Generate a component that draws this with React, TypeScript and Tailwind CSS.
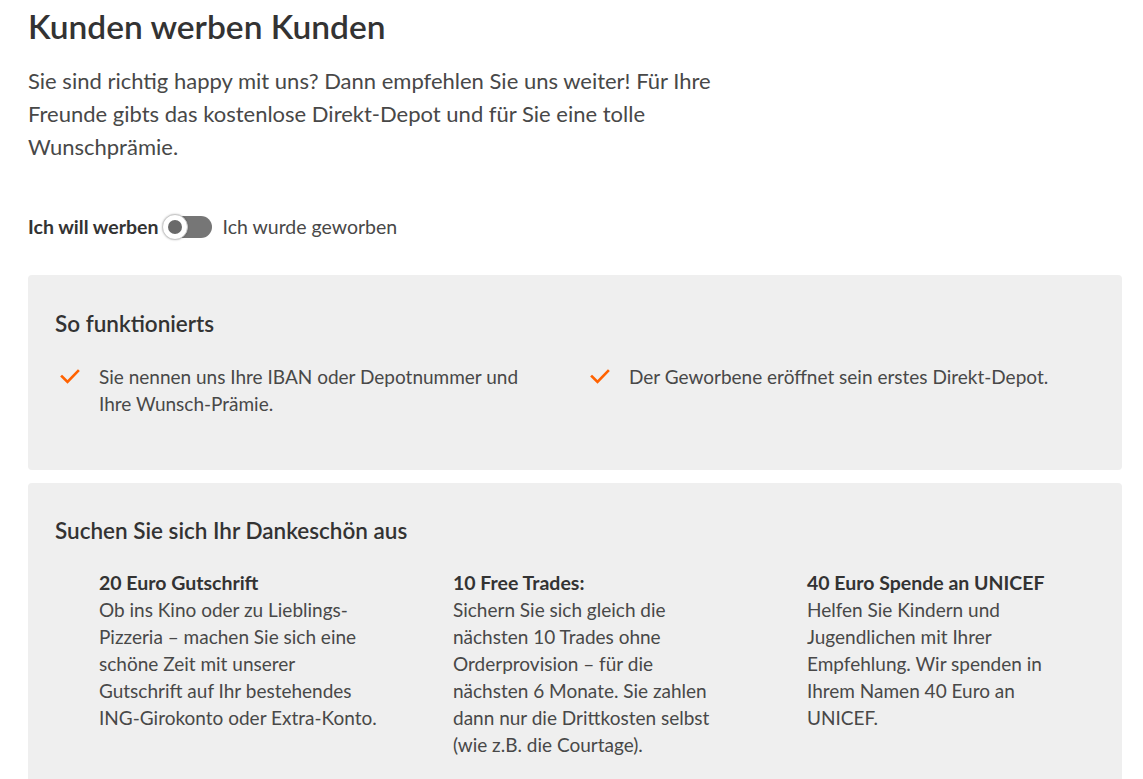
import React, { useState } from 'react';

const Check: React.FC = () => (
  <svg width="20" height="18" viewBox="0 0 20 18" className="shrink-0">
    <path d="M2 10.5 L7.5 16 L18 5" fill="none" stroke="#ff6200" strokeWidth="2.6" strokeLinecap="square" />
  </svg>
);

const rewards = [
  {
    title: '20 Euro Gutschrift',
    lines: [
      'Ob ins Kino oder zu Lieblings-',
      'Pizzeria – machen Sie sich eine',
      'schöne Zeit mit unserer',
      'Gutschrift auf Ihr bestehendes',
      'ING-Girokonto oder Extra-Konto.',
    ],
  },
  {
    title: '10 Free Trades:',
    lines: [
      'Sichern Sie sich gleich die',
      'nächsten 10 Trades ohne',
      'Orderprovision – für die',
      'nächsten 6 Monate. Sie zahlen',
      'dann nur die Drittkosten selbst',
      '(wie z.B. die Courtage).',
    ],
  },
  {
    title: '40 Euro Spende an UNICEF',
    lines: [
      'Helfen Sie Kindern und',
      'Jugendlichen mit Ihrer',
      'Empfehlung. Wir spenden in',
      'Ihrem Namen 40 Euro an',
      'UNICEF.',
    ],
  },
];

const App: React.FC = () => {
  const [recruited, setRecruited] = useState(false);

  return (
    <div className="min-h-screen bg-white pl-[28px] font-['Lato','Noto_Sans',sans-serif] text-[#333]">
      <h1 className="pt-[6px] text-[33.5px] leading-[40px] font-semibold text-[#333]">Kunden werben Kunden</h1>

      <p className="mt-[18px] text-[22px] leading-[33px] text-[#484848]">
        <span className="block">Sie sind richtig happy mit uns? Dann empfehlen Sie uns weiter! Für Ihre</span>
        <span className="block">Freunde gibts das kostenlose Direkt-Depot und für Sie eine tolle</span>
        <span className="block">Wunschprämie.</span>
      </p>

      {/* TOGGLE */}
      <div className="mt-[49px] flex h-[30px] items-center text-[19.5px]">
        <span className="font-bold text-[#333]">Ich will werben</span>
        <button
          onClick={() => setRecruited(!recruited)}
          className="relative ml-[3px] h-[30px] w-[52px]"
          aria-label="toggle"
        >
          <span className="absolute left-[4px] top-[4px] h-[22px] w-[46px] rounded-full bg-[#767676]" />
          <span
            className={`absolute top-[2px] flex h-[26px] w-[26px] items-center justify-center rounded-full border border-[#c8c8c8] bg-white shadow-[0_0_2px_rgba(0,0,0,0.25)] ${recruited ? 'left-[24px]' : 'left-0'}`}
          >
            <span className="h-[14px] w-[14px] rounded-full bg-[#6a6a6a]" />
          </span>
        </button>
        <span className="ml-[9px] text-[#484848]">Ich wurde geworben</span>
      </div>

      {/* SO FUNKTIONIERTS */}
      <section className="mt-[33px] w-[1094px] rounded-[4px] bg-[#efefef] px-[27px] pt-[35px] pb-[53px]">
        <h2 className="text-[22.5px] leading-[28px] font-semibold text-[#333]">So funktionierts</h2>
        <div className="mt-[25px] grid grid-cols-[530px_1fr] text-[19px] leading-[27px] text-[#484848]">
          <div className="flex items-start gap-[19px] pl-[5px]">
            <span className="mt-[3px]"><Check /></span>
            <p>
              <span className="block">Sie nennen uns Ihre IBAN oder Depotnummer und</span>
              <span className="block">Ihre Wunsch-Prämie.</span>
            </p>
          </div>
          <div className="flex items-start gap-[19px] pl-[5px]">
            <span className="mt-[3px]"><Check /></span>
            <p>Der Geworbene eröffnet sein erstes Direkt-Depot.</p>
          </div>
        </div>
      </section>

      {/* DANKESCHÖN */}
      <section className="mt-[13px] w-[1094px] rounded-[4px] bg-[#efefef] px-[27px] pt-[34px] pb-[40px]">
        <h2 className="text-[22.5px] leading-[28px] font-semibold text-[#333]">Suchen Sie sich Ihr Dankeschön aus</h2>
        <div className="mt-[24px] grid grid-cols-[354px_354px_1fr] pl-[44px] text-[19px] leading-[27px] text-[#484848]">
          {rewards.map((r) => (
            <div key={r.title}>
              <h3 className="text-[19.5px] font-bold text-[#333]">{r.title}</h3>
              {r.lines.map((l) => (
                <span key={l} className="block whitespace-nowrap">{l}</span>
              ))}
            </div>
          ))}
        </div>
      </section>
    </div>
  );
};

export default App;
